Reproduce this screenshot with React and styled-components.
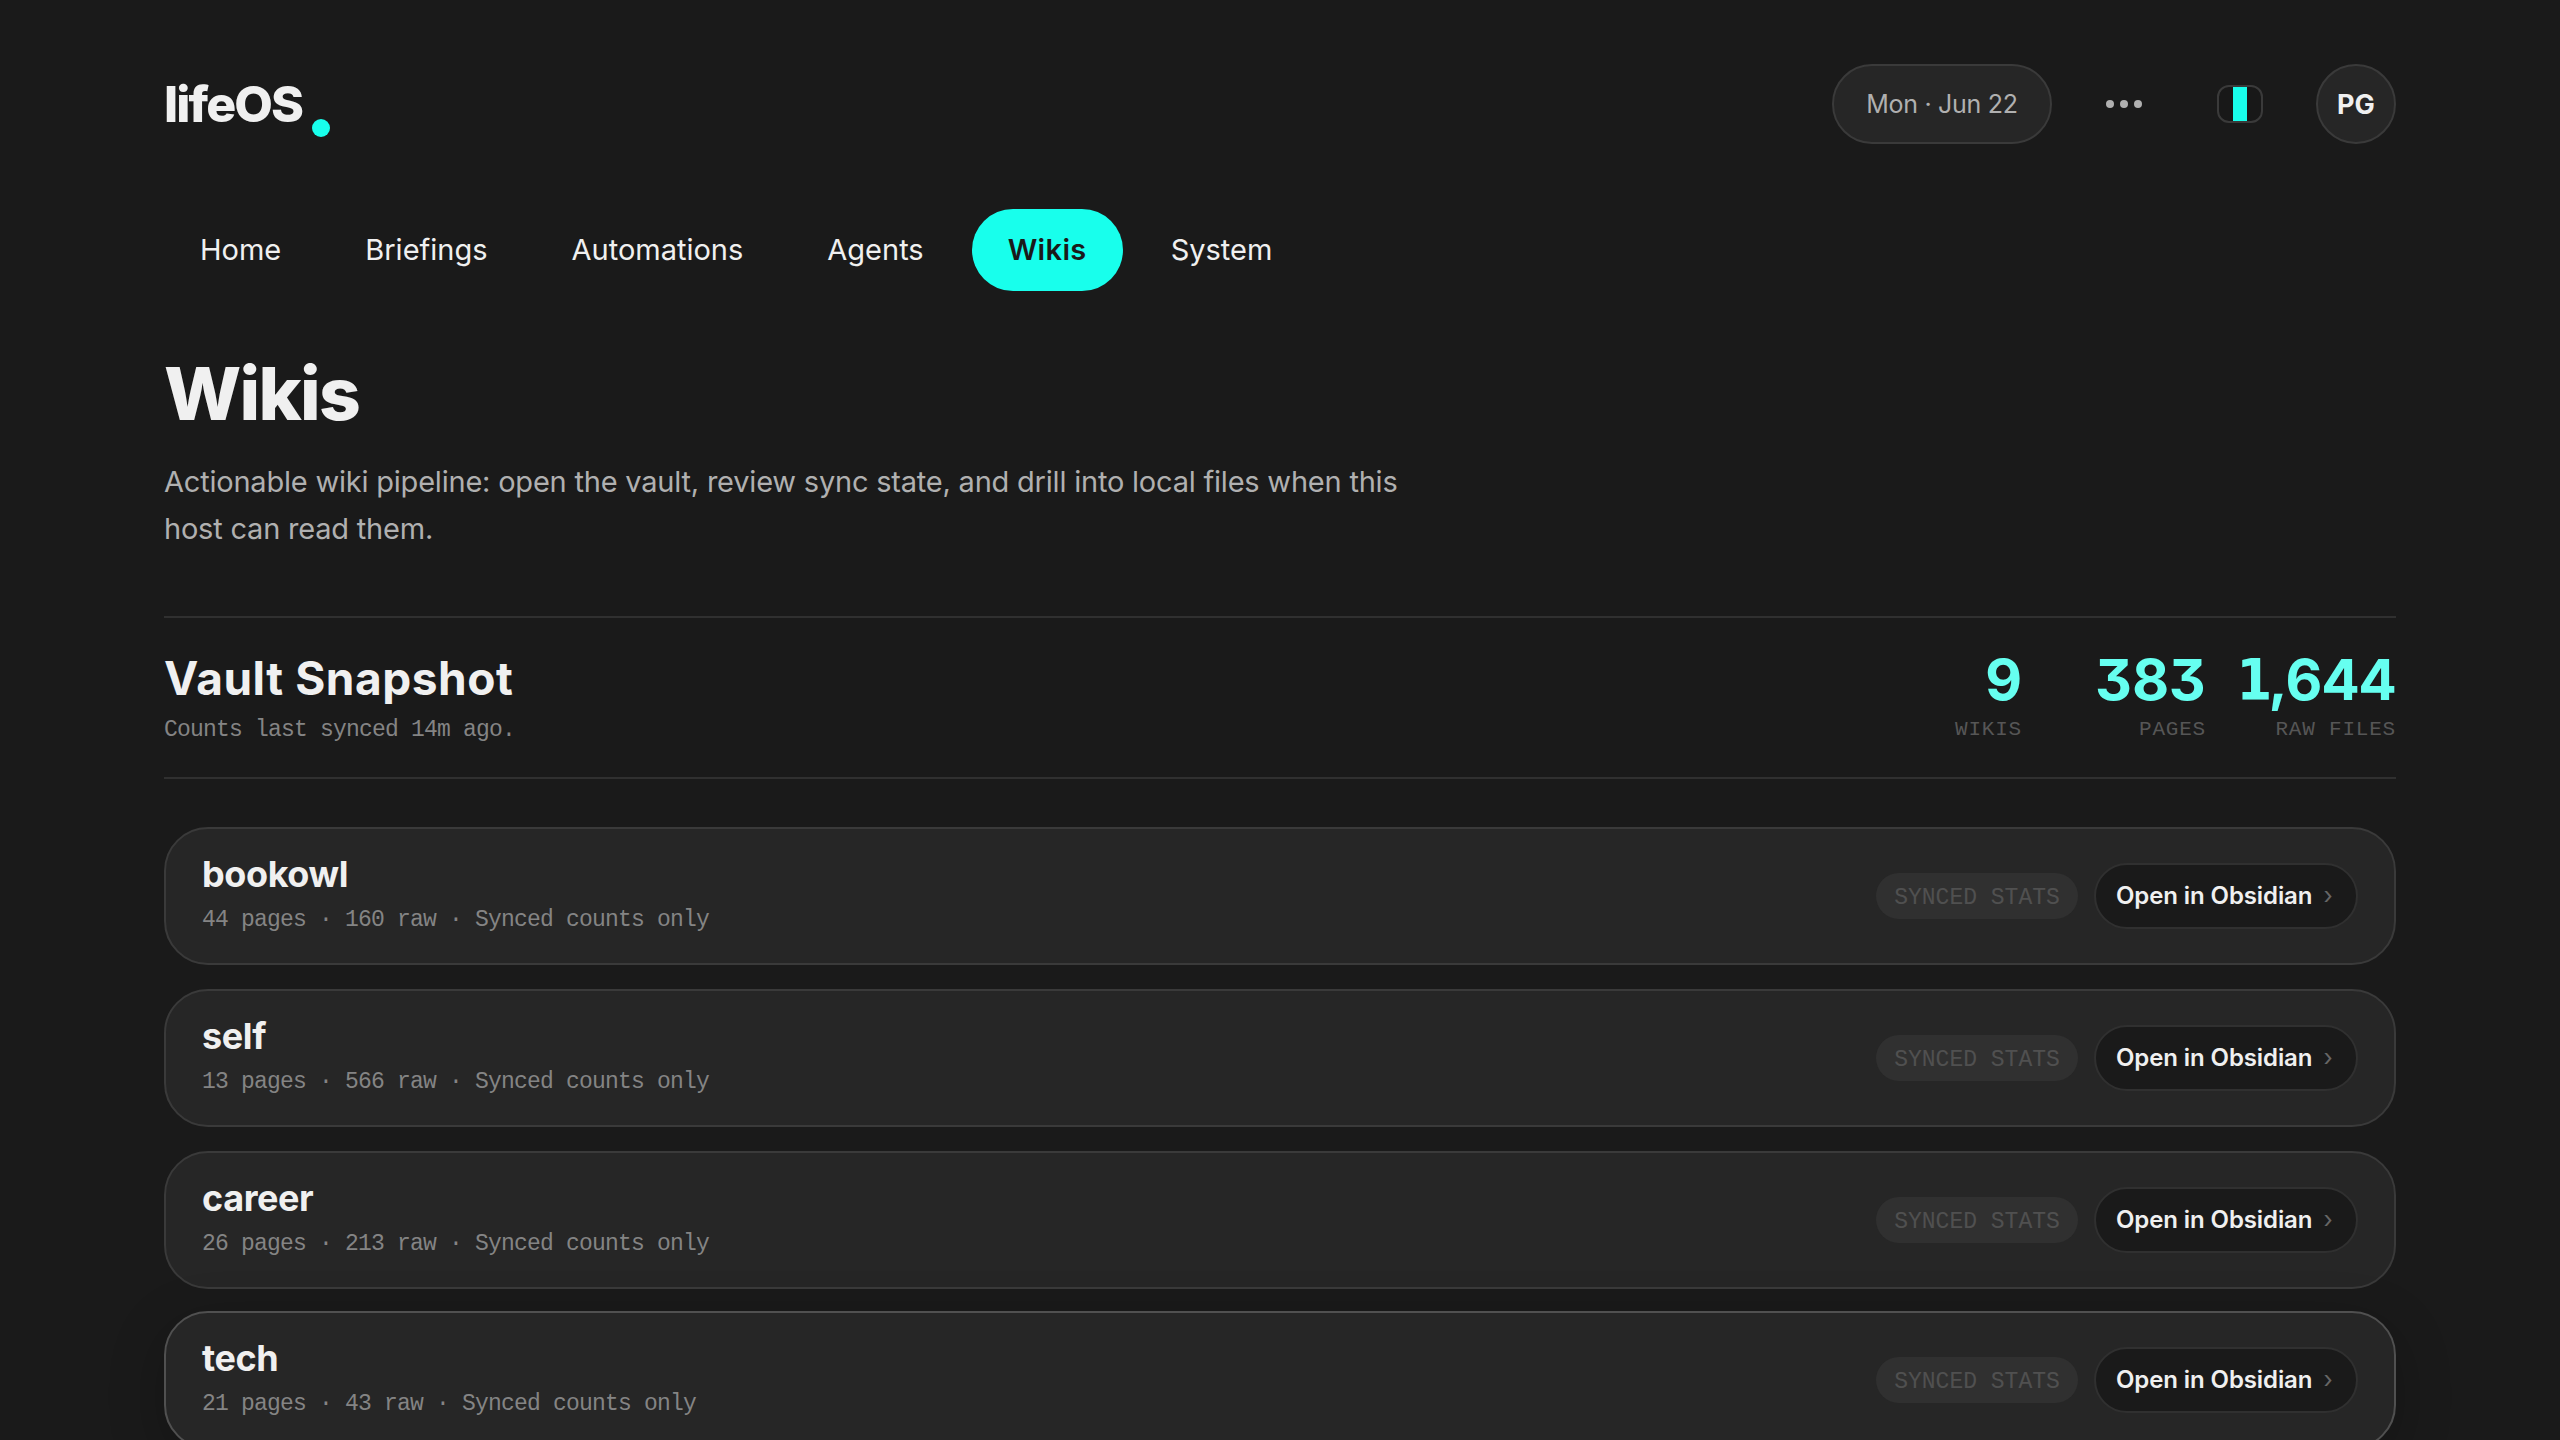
import React from "react";
import styled, { createGlobalStyle } from "styled-components";

const sans = `Inter, "Liberation Sans", sans-serif`;
const mono = `"Liberation Mono", "DejaVu Sans Mono", monospace`;

const GlobalStyle = createGlobalStyle`
  *, *::before, *::after { box-sizing: border-box; }
  body {
    margin: 0;
    background: #1a1a1a;
    color: #f0f0f0;
    font-family: ${sans};
  }
  h1, h2, h3, p { margin: 0; }
  button { font: inherit; color: inherit; border: 0; background: none; padding: 0; }
`;

const Page = styled.div`
  height: 1440px;
  overflow: hidden;
  padding: 64px 164px 0;
  background: #1a1a1a;
`;

const Header = styled.header`
  display: flex;
  justify-content: space-between;
  height: 80px;
`;

const Logo = styled.div`
  display: flex;
  align-items: center;
  width: 166px;
  justify-content: space-between;
  font-size: 50px;
  font-weight: 800;
  letter-spacing: -1.9px;
  line-height: 80px;
`;

const LogoText = styled.span`
  align-self: flex-start;
`;

const LogoDot = styled.i`
  align-self: flex-end;
  width: 18px;
  height: 18px;
  margin-bottom: 7px;
  border-radius: 50%;
  background: #18ffec;
`;

const HeaderTools = styled.div`
  display: flex;
  gap: 32px;
`;

const DatePill = styled.div`
  display: flex;
  align-items: center;
  justify-content: center;
  width: 220px;
  border: 2px solid #3a3a3a;
  border-radius: 40px;
  background: #262626;
  color: #b0b0b0;
  font-size: 25px;
  letter-spacing: -0.28px;
  white-space: nowrap;
`;

const MoreButton = styled.button`
  display: flex;
  align-items: center;
  justify-content: center;
  gap: 6px;
  width: 80px;
  height: 80px;
`;

const MoreDot = styled.i`
  width: 8px;
  height: 8px;
  border-radius: 50%;
  background: #b0b0b0;
`;

const ThemeButton = styled.button`
  display: grid;
  place-items: center;
  width: 88px;
  height: 80px;
`;

const Swatch = styled.span`
  display: flex;
  justify-content: center;
  width: 46px;
  height: 38px;
  border: 2px solid #3a3a3a;
  border-radius: 12px;
  overflow: hidden;
  background: #181818;
`;

const SwatchBar = styled.i`
  width: 14px;
  background: #18ffec;
`;

const Avatar = styled.div`
  display: grid;
  place-items: center;
  width: 80px;
  height: 80px;
  border: 2px solid #3a3a3a;
  border-radius: 50%;
  background: #262626;
  font-size: 27px;
  font-weight: 700;
  letter-spacing: 0;
`;

const Nav = styled.nav`
  display: flex;
  gap: 12px;
  margin-top: 65px;
`;

const NavItem = styled.a`
  display: flex;
  align-items: center;
  height: 82px;
  padding: 0 36px 2px;
  border-radius: 41px;
  font-size: 29px;
  background: ${(p) => (p.$active ? "#18ffec" : "transparent")};
  color: ${(p) => (p.$active ? "#1a1a1a" : "#f0f0f0")};
  font-weight: ${(p) => (p.$active ? 600 : 400)};
  letter-spacing: ${(p) => (p.$active ? "0.35px" : "0")};
`;

const Title = styled.h1`
  margin-top: 63px;
  font-size: 73px;
  line-height: 80px;
  font-weight: 800;
  letter-spacing: -1.7px;
`;

const Lead = styled.p`
  max-width: 1280px;
  margin-top: 24px;
  color: #b0b0b0;
  font-size: 29px;
  line-height: 47px;
  letter-spacing: -0.21px;
`;

const Snapshot = styled.section`
  display: flex;
  justify-content: space-between;
  height: 163px;
  margin-top: 64px;
  padding-top: 34px;
  border-top: 2px solid #303030;
  border-bottom: 2px solid #303030;
`;

const SnapshotTitle = styled.h2`
  padding-top: 1px;
  font-size: 46px;
  line-height: 50px;
  font-weight: 700;
  letter-spacing: 0.55px;
`;

const Meta = styled.p`
  margin-top: ${(p) => p.$gap}px;
  color: #848484;
  font-family: ${mono};
  font-size: 23px;
  line-height: 30px;
  letter-spacing: -0.8px;
  white-space: pre;
`;

const Stats = styled.div`
  display: grid;
  grid-template-columns: 144px 144px 150px;
  column-gap: 40px;
`;

const Stat = styled.div`
  display: flex;
  flex-direction: column;
  align-items: flex-end;
`;

const StatValue = styled.strong`
  height: 56px;
  color: #66fff0;
  font-size: 57px;
  line-height: 56px;
  font-weight: 700;
  font-feature-settings: "tnum", "cv09";
  white-space: nowrap;
`;

const SlabOne = styled.span`
  font-family: "DejaVu Sans Condensed", "DejaVu Sans", sans-serif;
  line-height: 1;
  margin-right: -2px;
`;

const StatLabel = styled.span`
  margin-top: 7px;
  color: #565656;
  font-family: ${mono};
  font-size: 21px;
  line-height: 30px;
  letter-spacing: 0.8px;
  text-transform: uppercase;
  white-space: pre;
`;

const CardList = styled.div`
  display: flex;
  flex-direction: column;
  gap: 24px;
  margin-top: 48px;
`;

const Card = styled.article`
  display: flex;
  align-items: center;
  justify-content: space-between;
  flex-shrink: 0;
  height: 138px;
  padding: 0 36px;
  border: 2px solid ${(p) => (p.$raised ? "#505050" : "#3a3a3a")};
  border-radius: 44px;
  background: #262626;
  transform: ${(p) => (p.$raised ? "translateY(-2px)" : "none")};
  box-shadow: ${(p) => (p.$raised ? "0 16px 56px rgba(0, 0, 0, 0.22)" : "none")};
`;

const CardText = styled.div`
  align-self: flex-start;
  padding-top: 23px;
`;

const CardTitle = styled.h3`
  font-size: 36px;
  line-height: 44px;
  font-weight: 700;
  letter-spacing: -0.4px;
`;

const Actions = styled.div`
  display: flex;
  align-items: center;
  gap: 16px;
`;

const Tag = styled.span`
  display: flex;
  align-items: center;
  justify-content: center;
  width: 202px;
  height: 46px;
  padding-top: 3px;
  border-radius: 23px;
  background: #303030;
  color: #505050;
  font-family: ${mono};
  font-size: 23px;
  white-space: pre;
`;

const OpenButton = styled.button`
  display: flex;
  align-items: center;
  gap: 11px;
  width: 264px;
  height: 66px;
  padding: 0 20px 1px;
  border: 2px solid #303030;
  border-radius: 33px;
  background: #1a1a1a;
  font-size: 24px;
  font-weight: 600;
  letter-spacing: -0.1px;
  white-space: nowrap;
`;

const Chevron = styled.span`
  color: #666;
  font-weight: 400;
`;

const navItems = ["Home", "Briefings", "Automations", "Agents", "Wikis", "System"];

const wikis = [
  { name: "bookowl", pages: 44, raw: 160 },
  { name: "self", pages: 13, raw: 566 },
  { name: "career", pages: 26, raw: 213 },
  { name: "tech", pages: 21, raw: 43, raised: true },
];

export default function App() {
  return (
    <>
      <GlobalStyle />
      <Page>
        <Header>
          <Logo>
            <LogoText>lifeOS</LogoText>
            <LogoDot />
          </Logo>
          <HeaderTools>
            <DatePill>Mon · Jun 22</DatePill>
            <MoreButton aria-label="More">
              <MoreDot />
              <MoreDot />
              <MoreDot />
            </MoreButton>
            <ThemeButton aria-label="Theme">
              <Swatch>
                <SwatchBar />
              </Swatch>
            </ThemeButton>
            <Avatar>PG</Avatar>
          </HeaderTools>
        </Header>
        <Nav>
          {navItems.map((item) => (
            <NavItem key={item} $active={item === "Wikis"}>
              {item}
            </NavItem>
          ))}
        </Nav>
        <Title>Wikis</Title>
        <Lead>
          Actionable wiki pipeline: open the vault, review sync state, and drill into local files
          when this host can read them.
        </Lead>
        <Snapshot>
          <div>
            <SnapshotTitle>Vault Snapshot</SnapshotTitle>
            <Meta $gap={12}>Counts last synced 14m ago.</Meta>
          </div>
          <Stats>
            <Stat>
              <StatValue>9</StatValue>
              <StatLabel>Wikis</StatLabel>
            </Stat>
            <Stat>
              <StatValue>383</StatValue>
              <StatLabel>Pages</StatLabel>
            </Stat>
            <Stat>
              <StatValue>
                <SlabOne>1</SlabOne>,644
              </StatValue>
              <StatLabel>Raw files</StatLabel>
            </Stat>
          </Stats>
        </Snapshot>
        <CardList>
          {wikis.map((w) => (
            <Card key={w.name} $raised={w.raised}>
              <CardText>
                <CardTitle>{w.name}</CardTitle>
                <Meta $gap={9}>{`${w.pages} pages · ${w.raw} raw · Synced counts only`}</Meta>
              </CardText>
              <Actions>
                <Tag>SYNCED STATS</Tag>
                <OpenButton>
                  Open in Obsidian
                  <Chevron>›</Chevron>
                </OpenButton>
              </Actions>
            </Card>
          ))}
        </CardList>
      </Page>
    </>
  );
}
